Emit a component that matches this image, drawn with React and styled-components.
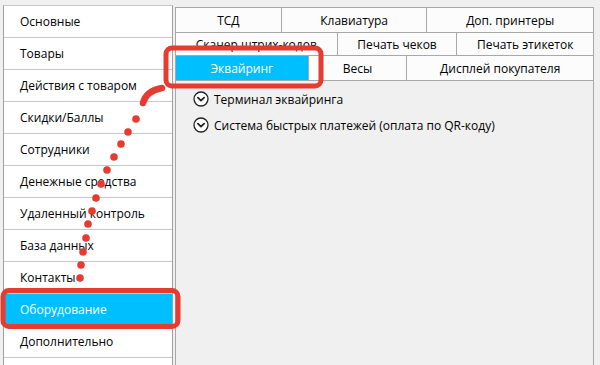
import React from 'react';
import styled, { createGlobalStyle } from 'styled-components';

const Global = createGlobalStyle`
  html, body { margin: 0; padding: 0; background: #f0f0f0; }
  body { font-family: "Open Sans", "Noto Sans", sans-serif; font-size: 12px; color: #000; }
`;

const Page = styled.div`
  position: relative;
  width: 600px;
  height: 365px;
  overflow: hidden;
  background: #f0f0f0;
  display: flex;
  align-items: flex-start;
  gap: 2px;
  padding: 5px 0 0 3px;
  box-sizing: border-box;
`;

const Sidebar = styled.ul`
  list-style: none;
  margin: 0;
  padding: 0;
  width: 170px;
  flex-shrink: 0;
  box-sizing: border-box;
  background: #fff;
  border-left: 1px solid #a0a0a0;
  border-right: 1px solid #a0a0a0;
  border-top: 1px solid #c8c8c8;
  height: 380px;
`;

const MenuItem = styled.li`
  height: 31px;
  border-bottom: 1px solid #c8c8c8;
  display: flex;
  align-items: center;
  padding-left: 16px;
  background: ${(p) => (p.$active ? '#00bfff' : '#fff')};
  color: ${(p) => (p.$active ? '#fff' : '#000')};
  white-space: nowrap;
`;

const Main = styled.div`
  margin-top: 2px;
  width: 419px;
  display: flex;
  flex-direction: column;
  height: 400px;
`;

const TabRow = styled.div`
  display: flex;
  margin-top: -1px;
  &:first-child { margin-top: 0; }
`;

const Tab = styled.div`
  box-sizing: border-box;
  height: ${(p) => p.$h}px;
  width: ${(p) => p.$w}px;
  margin-left: -1px;
  &:first-child { margin-left: 0; }
  border: 1px solid #a8a8a8;
  background: ${(p) => (p.$active ? '#00bfff' : '#fcfcfc')};
  color: ${(p) => (p.$active ? '#fff' : '#000')};
  display: flex;
  align-items: center;
  justify-content: center;
  white-space: nowrap;
  overflow: hidden;
  position: relative;
  z-index: ${(p) => (p.$active ? 1 : 0)};
`;

const Panel = styled.div`
  flex: 1;
  margin-top: -1px;
  border: 1px solid #a8a8a8;
  background: #f0f0f0;
  padding: 5px 0 0 17px;
  display: flex;
  flex-direction: column;
`;

const Expander = styled.div`
  height: 26px;
  display: flex;
  align-items: center;
  gap: 5px;
  white-space: nowrap;
`;

const Overlay = styled.svg`
  position: absolute;
  left: 0;
  top: 0;
  pointer-events: none;
`;

const menu = [
  'Основные',
  'Товары',
  'Действия с товаром',
  'Скидки/Баллы',
  'Сотрудники',
  'Денежные средства',
  'Удаленный контроль',
  'База данных',
  'Контакты',
  'Оборудование',
  'Дополнительно',
];

const tabRows = [
  { h: 26, tabs: [['ТСД', 107], ['Клавиатура', 147], ['Доп. принтеры', 168]] },
  { h: 24, tabs: [['Сканер штрих-кодов', 163], ['Печать чеков', 121], ['Печать этикеток', 138]] },
  { h: 26, tabs: [['Эквайринг', 134, true], ['Весы', 100], ['Дисплей покупателя', 188]] },
];

const ChevronCircle = () => (
  <svg width="16" height="16" viewBox="0 0 16 16">
    <circle cx="8" cy="8" r="7" fill="#fff" stroke="#222" strokeWidth="1.3" />
    <path d="M4.9 6.6 L8 9.6 L11.1 6.6" fill="none" stroke="#222" strokeWidth="1.8" strokeLinecap="round" strokeLinejoin="round" />
  </svg>
);

const dots = [
  [136, 119], [128, 132], [121, 144], [114, 157], [107, 170], [101, 184],
  [96, 198], [92, 211], [88, 224], [86, 238], [83, 252], [81, 265], [80, 278],
];

const RED = '#e53b30';

export default function App() {
  return (
    <>
      <Global />
      <Page>
        <Sidebar>
          {menu.map((m) => (
            <MenuItem key={m} $active={m === 'Оборудование'}>{m}</MenuItem>
          ))}
        </Sidebar>
        <Main>
          {tabRows.map((row, i) => (
            <TabRow key={i}>
              {row.tabs.map(([label, w, active]) => (
                <Tab key={label} $w={w} $h={row.h} $active={active}>{label}</Tab>
              ))}
            </TabRow>
          ))}
          <Panel>
            <Expander><ChevronCircle />Терминал эквайринга</Expander>
            <Expander><ChevronCircle />Система быстрых платежей (оплата по QR-коду)</Expander>
          </Panel>
        </Main>
        <Overlay width="600" height="365" viewBox="0 0 600 365">
          <rect x="166" y="48" width="155" height="38" rx="6" fill="none" stroke={RED} strokeWidth="5" />
          <rect x="3" y="290.5" width="175" height="36" rx="6" fill="none" stroke={RED} strokeWidth="5" />
          {dots.map(([x, y], i) => (
            <circle key={i} cx={x} cy={y} r="3.8" fill={RED} />
          ))}
          <path d="M143 103 Q146 91 162 88" fill="none" stroke={RED} strokeWidth="6.5" strokeLinecap="round" />
        </Overlay>
      </Page>
    </>
  );
}
